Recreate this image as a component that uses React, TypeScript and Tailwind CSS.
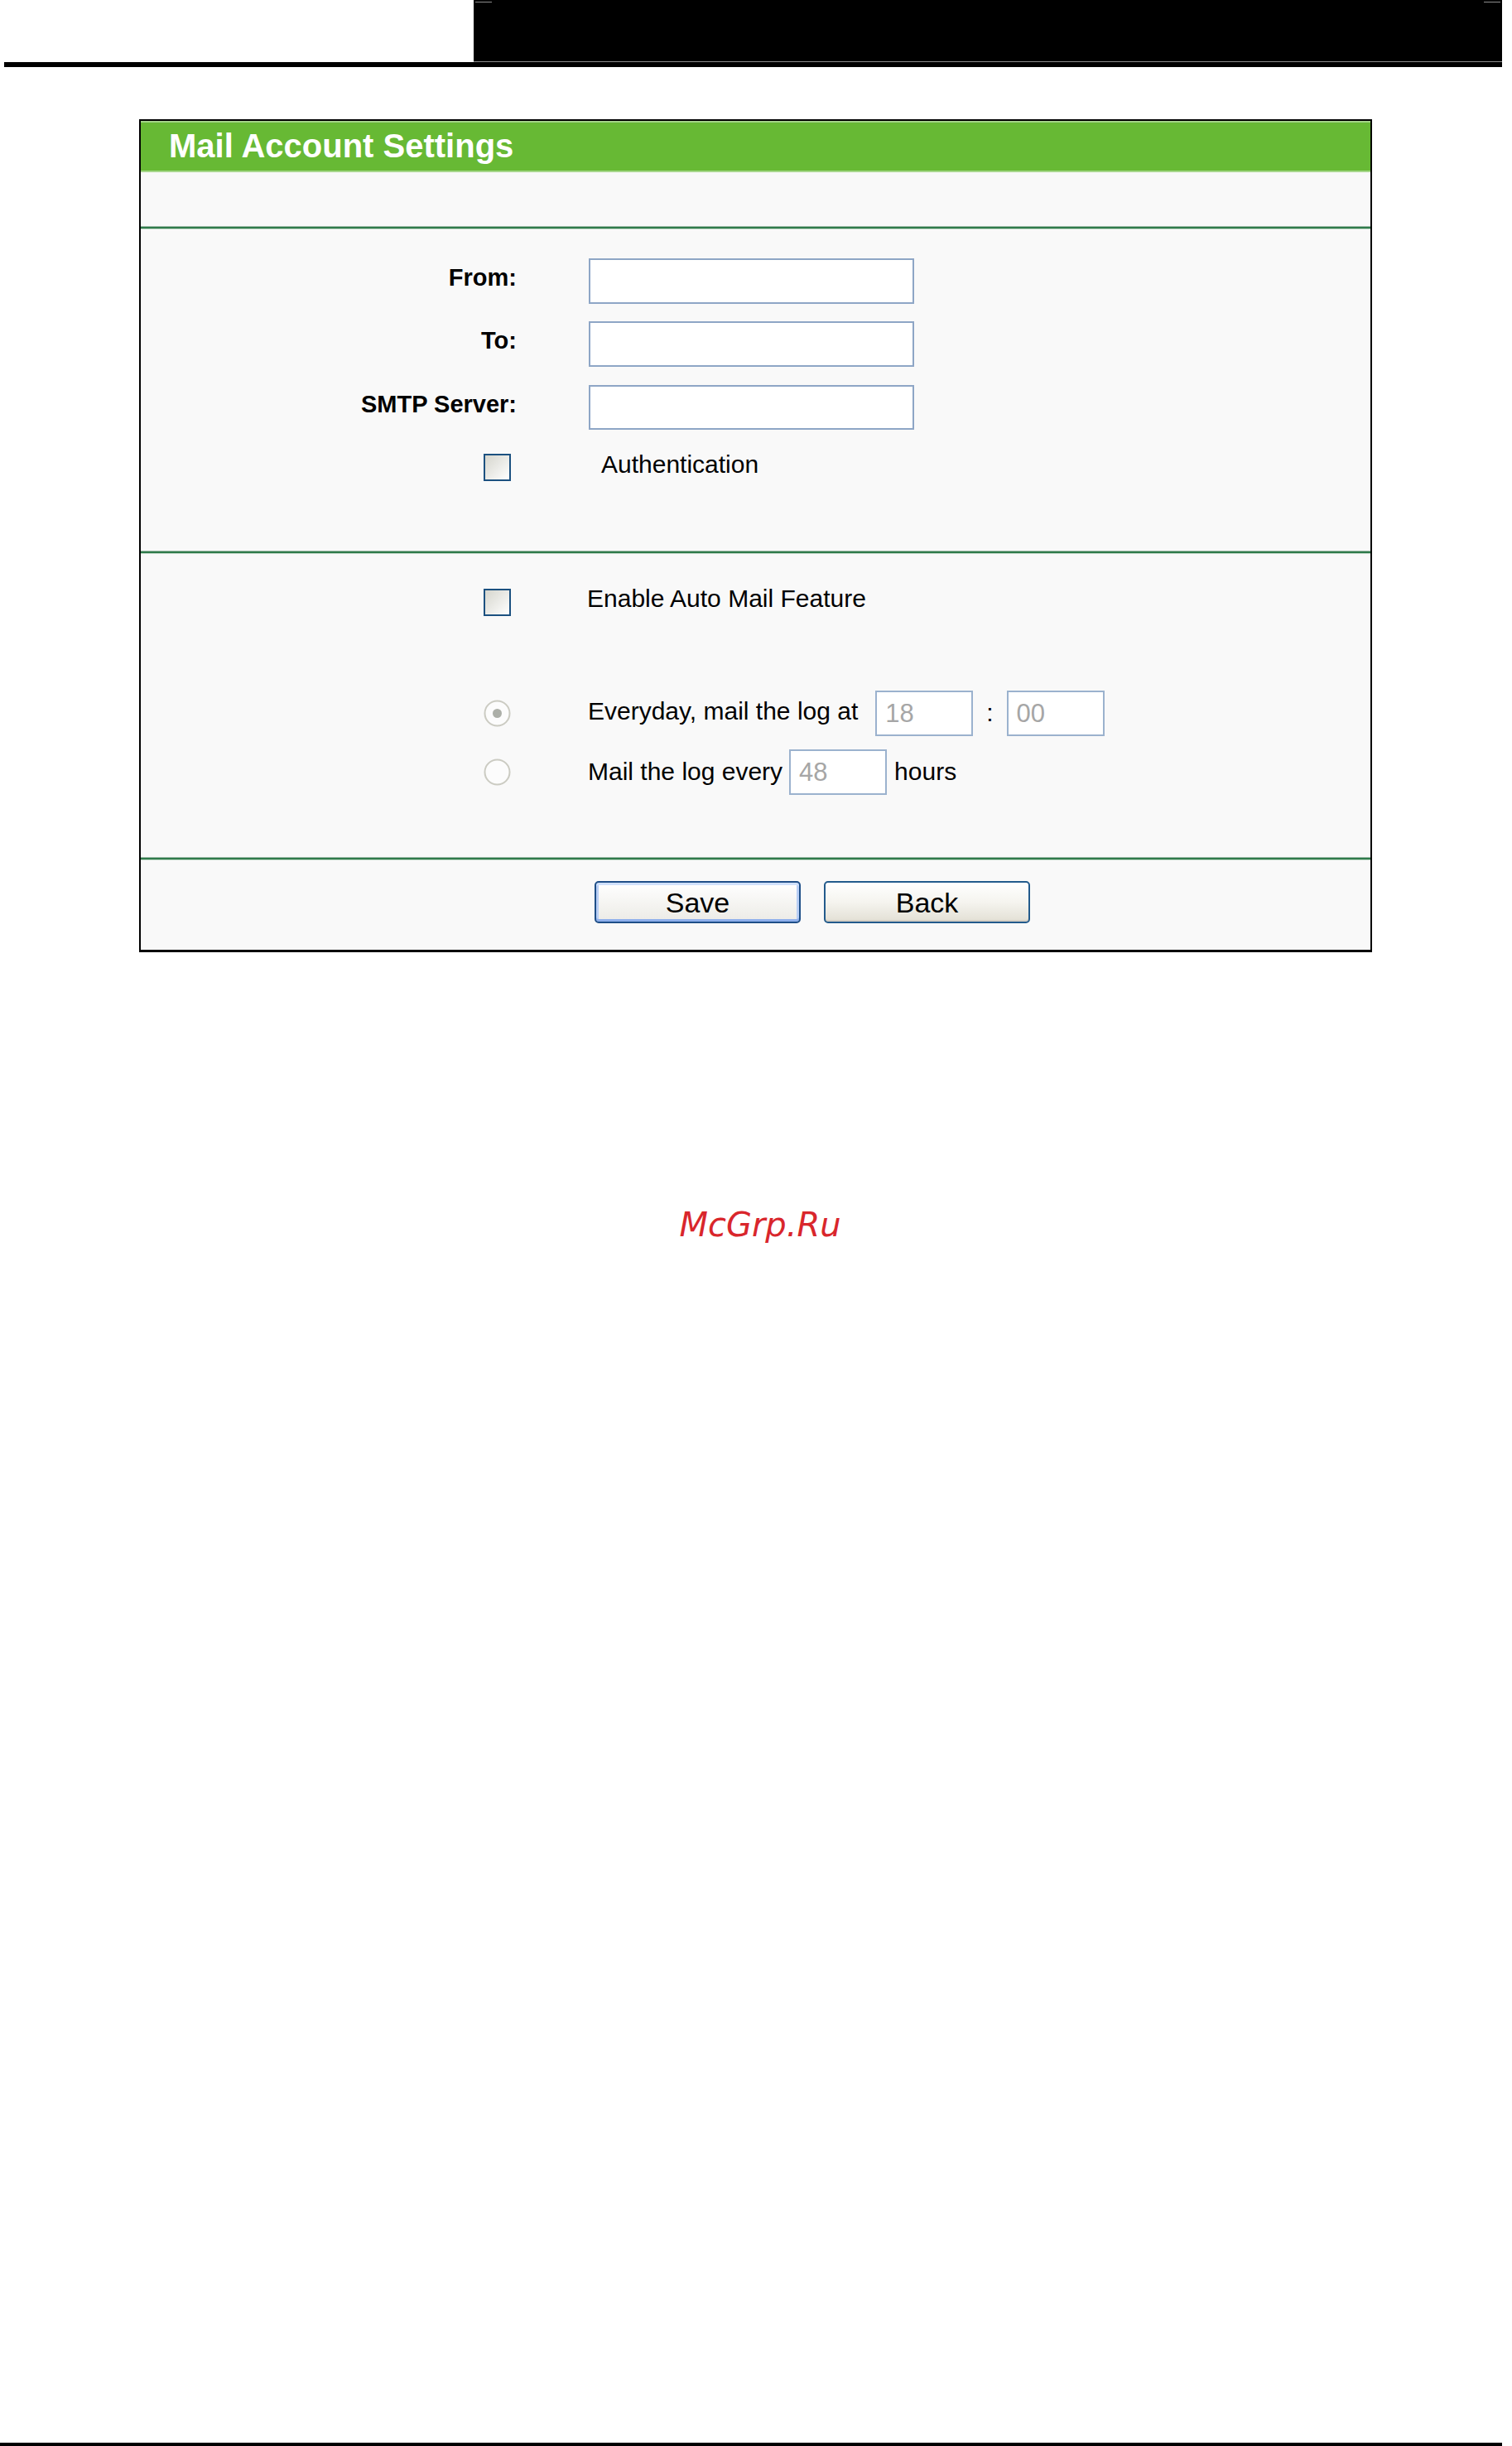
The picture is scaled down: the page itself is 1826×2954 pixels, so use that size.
import React from "react";

const Checkbox = () => (
    <div className="w-[33px] h-[33px] border-2 border-[#1c5180] bg-linear-to-br from-[#d6d6ce] to-white" />
);

const Radio = ({ checked }: { checked?: boolean }) => (
    <svg width="33" height="33" viewBox="0 0 33 33">
        <circle cx="16.5" cy="16.5" r="15" fill="#fcfcfc" stroke="#cbcbc2" strokeWidth="2" />
        {checked && <circle cx="16.5" cy="16.5" r="5.5" fill="#acafa8" />}
    </svg>
);

const SmallInput = ({ value, className }: { value: string; className?: string }) => (
    <div
        className={
            "w-[118px] h-[55px] border-2 border-[#9bb2ce] bg-white pl-[10px] flex items-center text-[31px] text-[#a6a6a6] " +
            (className ?? "")
        }
    >
        {value}
    </div>
);

const Separator = () => (
    <div className="h-[4px] bg-[#2f7b4b] border-t border-[#9cbaa6] border-b border-b-[#c2d9c8]" />
);

const App = () => {
    return (
        <div className="h-[2954px] flex flex-col bg-white text-black font-['Liberation_Sans',Arial,sans-serif]">
            {/* top bar */}
            <div className="flex">
                <div className="w-[572px]" />
                <div className="relative w-[1242px] h-[75px] bg-black border-b border-[#8c8c8c]">
                    <div className="absolute left-[2px] top-[2px] w-[20px] h-[1px] bg-[#8c8c8c]" />
                    <div className="absolute right-[2px] top-[2px] w-[20px] h-[1px] bg-[#8c8c8c]" />
                </div>
            </div>
            <div className="ml-[5px] w-[1809px] h-[6px] bg-black" />

            {/* panel */}
            <div className="mt-[63px] ml-[168px] w-[1489px] border-2 border-b-[3px] border-black bg-[#f9f9f9]">
                <div className="h-[62px] bg-[#67b934] border-t-2 border-[#a3d487] border-b-2 border-b-[#a6d78b] flex items-center pl-[34px]">
                    <h1 className="text-white font-bold text-[40px] leading-none pb-[2px]">Mail Account Settings</h1>
                </div>
                <div className="h-[65px]" />
                <Separator />

                {/* account section */}
                <div className="pt-[35px] pb-[84px]">
                    <div className="flex items-center h-[55px]">
                        <div className="w-[454px] text-right font-bold text-[29px] leading-none pb-[8px]">From:</div>
                        <div className="ml-[87px] w-[393px] h-[55px] border-2 border-[#8ea6c6] bg-white" />
                    </div>
                    <div className="flex items-center h-[55px] mt-[21px]">
                        <div className="w-[454px] text-right font-bold text-[29px] leading-none pb-[8px]">To:</div>
                        <div className="ml-[87px] w-[393px] h-[55px] border-2 border-[#8ea6c6] bg-white" />
                    </div>
                    <div className="flex items-center h-[54px] mt-[22px]">
                        <div className="w-[454px] text-right font-bold text-[29px] leading-none pb-[8px]">SMTP Server:</div>
                        <div className="ml-[87px] w-[393px] h-[54px] border-2 border-[#8ea6c6] bg-white" />
                    </div>
                    <div className="flex items-center h-[33px] mt-[29px]">
                        <div className="w-[454px] flex justify-end pr-[7px]">
                            <Checkbox />
                        </div>
                        <span className="ml-[102px] text-[30px] leading-none pb-[8px]">Authentication</span>
                    </div>
                </div>
                <Separator />

                {/* auto mail section */}
                <div className="pt-[42px] pb-[76px] text-[30px] leading-none">
                    <div className="flex items-center h-[33px]">
                        <div className="w-[454px] flex justify-end pr-[7px]">
                            <Checkbox />
                        </div>
                        <span className="ml-[85px] pb-[10px]">Enable Auto Mail Feature</span>
                    </div>
                    <div className="flex items-center h-[56px] mt-[89px]">
                        <div className="w-[454px] flex justify-end pr-[7px]">
                            <Radio checked />
                        </div>
                        <span className="ml-[86px] pb-[4px]">Everyday, mail the log at</span>
                        <SmallInput value="18" className="ml-[21px]" />
                        <span className="mx-[16px]">:</span>
                        <SmallInput value="00" />
                    </div>
                    <div className="flex items-center h-[54px] mt-[16px]">
                        <div className="w-[454px] flex justify-end pr-[7px]">
                            <Radio />
                        </div>
                        <span className="ml-[86px]">Mail the log every</span>
                        <SmallInput value="48" className="ml-[8px]" />
                        <span className="ml-[9px]">hours</span>
                    </div>
                </div>
                <Separator />

                {/* buttons */}
                <div className="pt-[25px] pb-[32px] flex">
                    <div className="w-[454px]" />
                    <button className="ml-[94px] w-[249px] h-[51px] rounded-[5px] border-2 border-[#1f4f88] bg-linear-to-b from-white to-[#ecebe6] shadow-[inset_0_-3px_0_#8fb0ec,inset_0_3px_0_#cfe0fb,inset_3px_0_0_#b9cff5,inset_-3px_0_0_#b9cff5] text-[34px] leading-none">
                        Save
                    </button>
                    <button className="ml-[28px] w-[249px] h-[51px] rounded-[5px] border-2 border-[#235b8c] bg-linear-to-b from-white via-[#f5f4ef] to-[#e3e0d5] shadow-[inset_0_-2px_0_#d6d0c5] text-[34px] leading-none">
                        Back
                    </button>
                </div>
            </div>

            {/* watermark */}
            <div className="mt-[309px] pl-[10px] text-center">
                <span className="font-['DejaVu_Sans',sans-serif] italic text-[40px] leading-none text-[#d9262c]">McGrp.Ru</span>
            </div>

            <div className="mt-auto w-[1814px] h-[4px] bg-black" />
        </div>
    );
};

export default App;
